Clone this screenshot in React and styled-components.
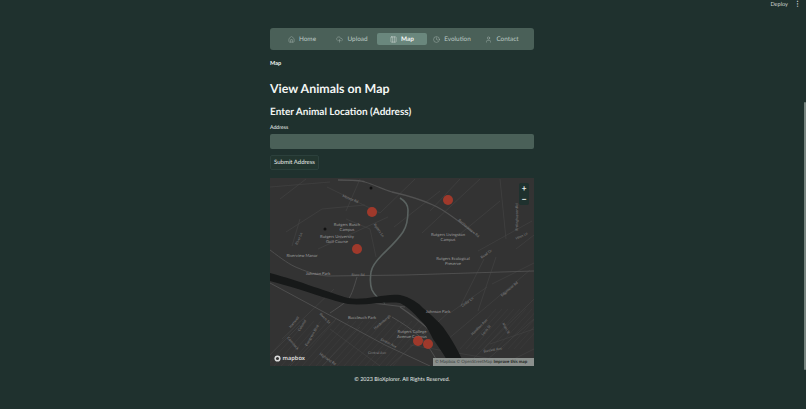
import React from "react";
import styled, { createGlobalStyle } from "styled-components";
import { House, CloudUpload, Columns3, Clock, User } from "lucide-react";

const GlobalStyle = createGlobalStyle`
  html, body { margin: 0; padding: 0; height: 100%; overflow: hidden; background: #1f312e; }
  body {
    font-family: Lato, "Noto Sans", sans-serif;
    color: #f2f5f3;
    text-rendering: geometricPrecision;
  }
`;

const Page = styled.div`
  position: relative;
  width: 806px;
  height: 409px;
  padding: 28px 0 0 270px;
  box-sizing: border-box;
  background: #1f312e;
`;

const Column = styled.main`
  width: 264px;
  display: flex;
  flex-direction: column;
`;

const TopActions = styled.div`
  position: absolute;
  top: 1px;
  right: 5px;
  display: flex;
  align-items: center;
  gap: 6px;
  font-size: 5.6px;
  line-height: 7px;
  color: #cfd6d2;
`;

const Kebab = styled.span`
  font-size: 7px;
  font-weight: 700;
`;

const ScrollThumb = styled.div`
  position: absolute;
  top: 102px;
  right: 0;
  width: 2px;
  height: 268px;
  border-radius: 1px;
  background: #76847f;
`;

const Nav = styled.nav`
  height: 22px;
  padding: 0 6px 0 7px;
  box-sizing: border-box;
  display: grid;
  grid-template-columns: repeat(5, 50px);
  align-items: center;
  border-radius: 3px;
  background: #4a6058;
`;

const NavItem = styled.a`
  height: 12px;
  display: flex;
  align-items: center;
  justify-content: center;
  gap: 4px;
  border-radius: 2px;
  font-size: 6.4px;
  font-weight: ${(p) => (p.$active ? 700 : 400)};
  color: ${(p) => (p.$active ? "#f2f5f3" : "#bccac4")};
  background: ${(p) => (p.$active ? "#6a877d" : "transparent")};
`;

const Crumb = styled.div`
  margin-top: 10px;
  font-size: 5.6px;
  line-height: 7px;
  font-weight: 700;
`;

const Title = styled.h1`
  margin: 13px 0 0;
  font-size: 12.4px;
  line-height: 17px;
  font-weight: 700;
`;

const SubTitle = styled.h2`
  margin: 9px 0 0;
  font-size: 10px;
  line-height: 13px;
  font-weight: 700;
`;

const Label = styled.label`
  margin-top: 6px;
  font-size: 5.2px;
  line-height: 7px;
`;

const AddressInput = styled.input`
  margin-top: 2px;
  height: 15px;
  padding: 0 4px;
  box-sizing: border-box;
  border: 0;
  outline: 0;
  border-radius: 2px;
  background: #4a6058;
`;

const SubmitButton = styled.button`
  align-self: flex-start;
  margin-top: 6px;
  height: 15px;
  width: 49px;
  padding: 0;
  border: 1px solid #2c403c;
  border-radius: 2px;
  background: #22352f;
  color: #e6ebe8;
  font: 400 6px Lato, sans-serif;
  text-rendering: geometricPrecision;
`;

const MapFrame = styled.section`
  position: relative;
  margin-top: 8px;
  height: 188px;
  overflow: hidden;
  background: #333333;
`;

const MapSvg = styled.svg`
  display: block;
`;

const ZoomControl = styled.div`
  position: absolute;
  top: 5px;
  right: 5px;
  width: 10px;
  display: flex;
  flex-direction: column;
  background: #1f312e;
  border-radius: 2px;
`;

const ZoomButton = styled.span`
  height: 11px;
  display: flex;
  align-items: center;
  justify-content: center;
  color: #e8ecea;
  font: 700 8px/1 "Liberation Sans", sans-serif;
`;

const MapboxLogo = styled.div`
  position: absolute;
  left: 4px;
  bottom: 3px;
  display: flex;
  align-items: center;
  gap: 1.5px;
  font: 600 5.7px/9px "Noto Sans", sans-serif;
  color: #dcdcdc;
`;

const Attribution = styled.div`
  position: absolute;
  right: 0;
  bottom: 0;
  width: 101px;
  height: 8px;
  box-sizing: border-box;
  padding-left: 2px;
  background: #8b908d;
  font-size: 4.4px;
  line-height: 8px;
  white-space: nowrap;
  color: #3b4240;
  b { font-weight: 700; color: #1d2421; }
`;

const Footer = styled.footer`
  margin-top: 10px;
  text-align: center;
  font-size: 5.5px;
  line-height: 8px;
  color: #e6ebe8;
`;

const navItems = [
  { label: "Home", Icon: House },
  { label: "Upload", Icon: CloudUpload },
  { label: "Map", Icon: Columns3, active: true },
  { label: "Evolution", Icon: Clock },
  { label: "Contact", Icon: User },
];

const minorRoads = [
  "M0 8 L60 3", "M90 0 L76 32", "M16 53 L52 30 L95 26", "M36 0 L10 20", "M57 8 L110 34",
  "M110 34 L145 0", "M160 32 L190 0", "M124 48 L170 12", "M152 54 L210 0", "M184 60 L230 22",
  "M208 72 L262 42", "M214 80 L190 128", "M226 78 L208 132", "M246 70 L264 56",
  "M222 105 L264 84", "M230 0 L236 60", "M76 40 L100 50 L106 78",
  "M48 70 L118 38", "M30 40 L22 67", "M12 160 L64 110", "M0 176 L30 146", "M20 187 L66 140",
  "M52 187 L90 148", "M60 150 L110 187", "M120 187 L180 132", "M196 187 L264 120", "M210 187 L264 140",
  "M220 165 L264 150", "M230 187 L264 170", "M140 166 L264 187", "M180 134 L217 108", "M177 161 L260 91",
];

const hatch = Array.from({ length: 20 }, (_, i) => `M${-10 + i * 7} 187 L${30 + i * 7} 142`);
const hatchRight = Array.from({ length: 11 }, (_, i) => `M${190 + i * 6} 170 L${226 + i * 6} 130`);

const labels = [
  ["Rutgers Busch", 77, 47], ["Campus", 77, 52], ["Rutgers University", 67, 59], ["Golf Course", 67, 64],
  ["Riverview Manor", 32, 78], ["Johnson Park", 48, 96], ["Rutgers Livingston", 178, 57],
  ["Campus", 178, 62], ["Rutgers Ecological", 183, 81], ["Preserve", 183, 86], ["Buccleuch Park", 92, 140],
  ["Johnson Park", 168, 134], ["Rutgers College", 142, 154], ["Avenue Campus", 142, 159],
];

const roadLabels = [
  ["Ryders Ln", 108, 52, 55], ["River Ln", 30, 60, -68], ["Meteor Rd", 80, 21, 22], ["River Rd", 88, 97, 0],
  ["Bartholomew Rd", 198, 50, 40], ["Road Dr", 217, 76, -36], ["Frelinghuysen Rd", 248, 38, -90],
  ["Hoes Ln", 252, 58, -25], ["Rivers St", 54, 140, 45], ["Hartwell", 25, 144, -50], ["Colonial", 33, 147, -60],
  ["Comstock", 22, 165, 50], ["Evergreen Blvd", 43, 157, -60], ["Hardenbergh", 113, 144, -40],
  ["Easton Ave", 118, 165, 28], ["Central Ave", 107, 175, 0], ["Highland Rd", 57, 181, 35],
  ["Cedar Ln", 198, 124, -35], ["Edgemoor Rd", 240, 111, -40], ["Hamilton Ave", 210, 149, -45],
  ["Louis St", 217, 152, -50], ["Main St", 235, 150, 60], ["Bartlett Ave", 223, 172, -10],
];

function MapDrawing() {
  return (
    <MapSvg width="264" height="188" viewBox="0 -1 264 188">
      <rect y="-1" width="264" height="188" fill="#333333" />
      <g fill="none" stroke="#454545" strokeWidth=".6">
        {hatch.map((d) => <path key={d} d={d} strokeWidth=".35" />)}
        {hatchRight.map((d) => <path key={d} d={d} strokeWidth=".35" />)}
        {minorRoads.map((d) => <path key={d} d={d} />)}
      </g>
      <g fill="none" stroke="#515151" strokeWidth=".9">
        <path d="M0 104 L115 166 L160 187" />
        <path d="M0 71 C12 80 20 86 28 89 C40 94 50 97 60 97 L135 96 L264 92" />
        <path d="M87 98 C84 108 82 115 78 121 C72 126 66 130 60 134" />
        <path d="M78 121 L135 128" />
        <path d="M68 1 C80 1 90 1 95 3 C105 6 112 10 122 13 C140 17 152 21 163 26 C172 30 190 43 202 53" strokeWidth="1.3" />
        <path d="M130 128 C142 136 154 146 163 154 C170 162 176 174 180 184" strokeWidth="1.4" />
        <path d="M122 138 C132 144 142 150 150 158 C158 166 164 176 170 187" />
      </g>
      <path d="M130 19 C135 22 138 26 138 31 C138 40 137 47 133 53 C127 62 118 70 112 76 C106 82 102 87 101 93 C100 100 100 106 102 111 C105 117 110 121 115 124" fill="none" stroke="#5a6260" strokeWidth="1.6" />
      <path
        d="M0 94 C30 102 60 114 78 119 C95 122 115 114 130 116 C140 118 150 125 153 129 C160 135 168 142 173 148 C182 160 190 175 195 187 L180 187 C176 178 170 170 163 160 C159 152 156 146 150 141 C144 134 138 128 130 124 C115 122 95 127 78 125 C60 121 45 115 28 110 C18 107 8 104 0 102 Z"
        fill="#171919"
      />
      <circle cx="101" cy="9" r="1.5" fill="#111" />
      <circle cx="55" cy="50" r="1.5" fill="#111" />
      <g fontSize="4.2" fill="#9a9a9a" textAnchor="middle">
        {labels.map(([t, x, y], i) => <text key={i} x={x} y={y}>{t}</text>)}
      </g>
      <g fontSize="3.6" fill="#858585" textAnchor="middle">
        {roadLabels.map(([t, x, y, r]) => (
          <text key={t} transform={`translate(${x} ${y}) rotate(${r})`}>{t}</text>
        ))}
      </g>
      <g fill="#a83a2a" fillOpacity=".92">
        <circle cx="102" cy="33" r="5" />
        <circle cx="178" cy="21" r="5" />
        <circle cx="87" cy="70" r="5" />
        <circle cx="148" cy="162" r="5" />
        <circle cx="158" cy="165" r="5" />
      </g>
    </MapSvg>
  );
}

export default function App() {
  return (
    <Page>
      <GlobalStyle />
      <TopActions>
        <span>Deploy</span>
        <Kebab>⋮</Kebab>
      </TopActions>
      <ScrollThumb />
      <Column>
        <Nav>
          {navItems.map(({ label, Icon, active }) => (
            <NavItem key={label} $active={active}>
              <Icon size={7} strokeWidth={1.3} />
              {label}
            </NavItem>
          ))}
        </Nav>
        <Crumb>Map</Crumb>
        <Title>View Animals on Map</Title>
        <SubTitle>Enter Animal Location (Address)</SubTitle>
        <Label>Address</Label>
        <AddressInput />
        <SubmitButton>Submit Address</SubmitButton>
        <MapFrame>
          <MapDrawing />
          <ZoomControl>
            <ZoomButton>+</ZoomButton>
            <ZoomButton>−</ZoomButton>
          </ZoomControl>
          <MapboxLogo>
            <svg width="7" height="7" viewBox="0 0 10 10">
              <circle cx="5" cy="5" r="4.4" fill="#dcdcdc" />
              <circle cx="5" cy="5" r="2.2" fill="#333" />
            </svg>
            mapbox
          </MapboxLogo>
          <Attribution>
            © Mapbox © OpenStreetMap <b>Improve this map</b>
          </Attribution>
        </MapFrame>
        <Footer>© 2023 BioXplorer. All Rights Reserved.</Footer>
      </Column>
    </Page>
  );
}
